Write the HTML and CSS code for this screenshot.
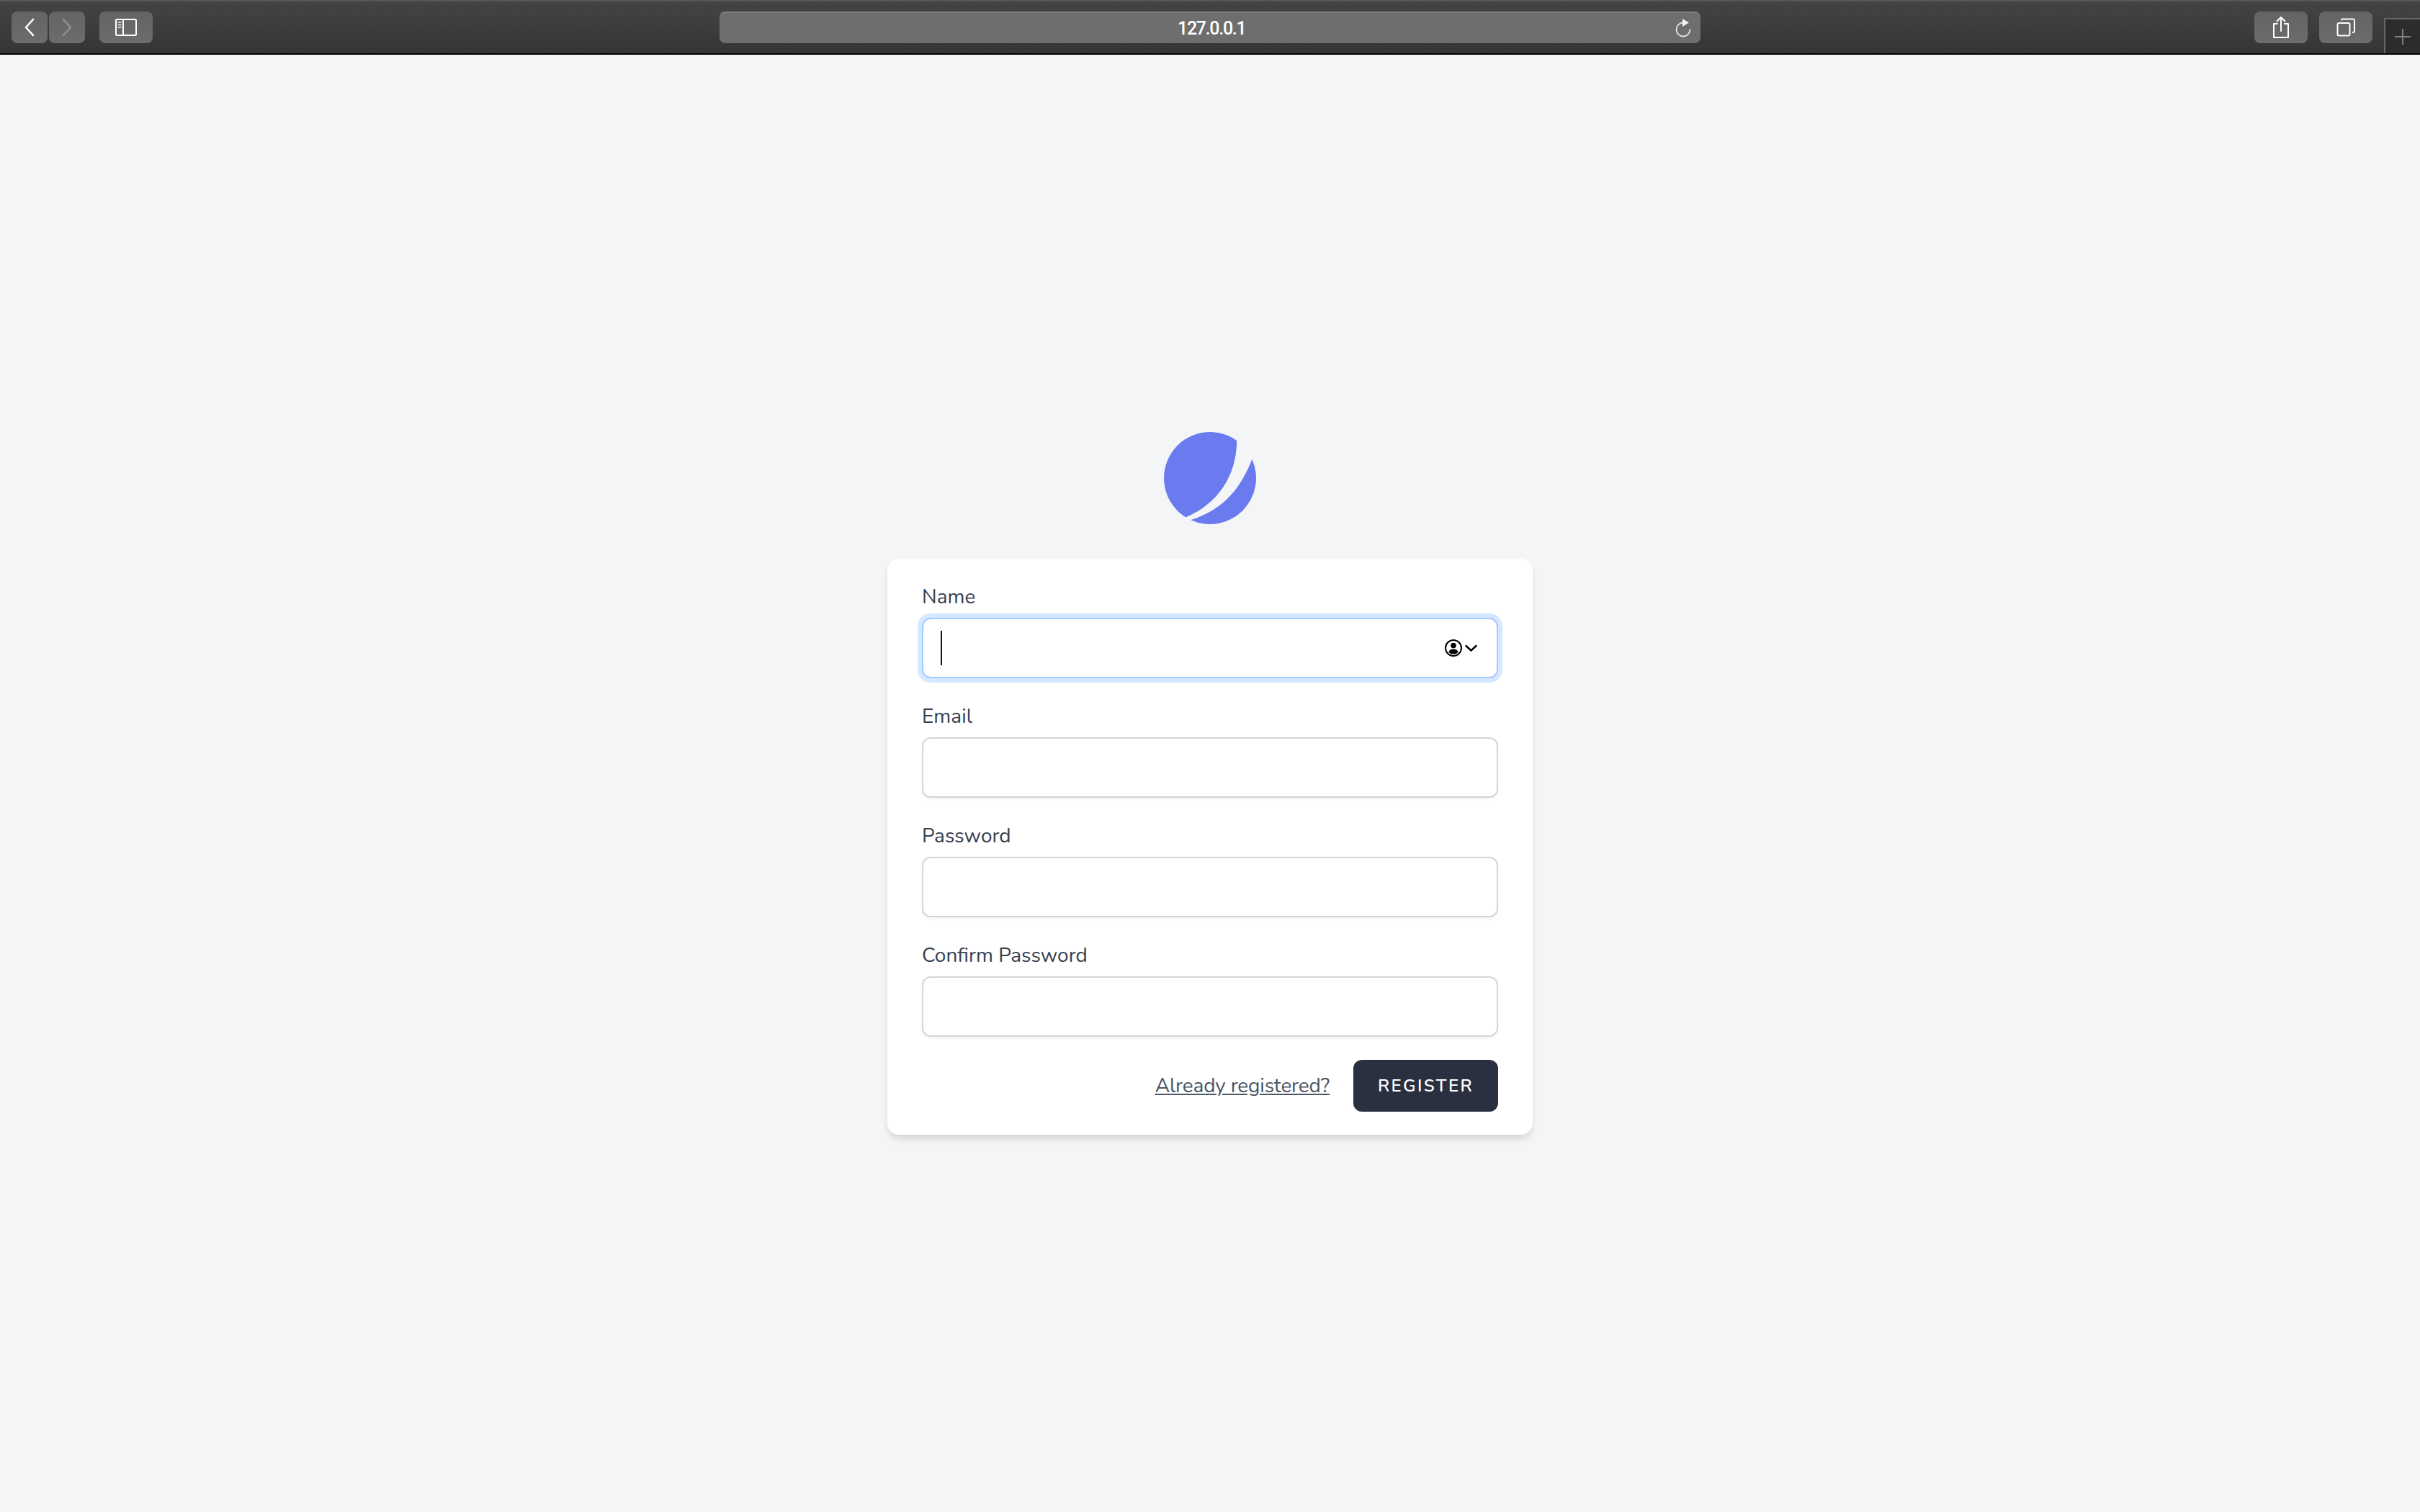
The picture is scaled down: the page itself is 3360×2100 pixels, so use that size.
FILE: index.html
```html
<!DOCTYPE html>
<html lang="en">
<head>
    <meta charset="UTF-8">
    <title>127.0.0.1</title>
    <link rel="stylesheet" href="styles.css">
</head>
<body>

    <!-- Browser toolbar -->
    <header class="toolbar">
        <div class="toolbar-left">
            <div class="tool-btn nav-btn">
                <svg width="16" height="26" viewBox="0 0 16 26"><path d="M13 2 3 13l10 11" fill="none" stroke="#fff" stroke-width="2.6" stroke-linecap="round" stroke-linejoin="round"/></svg>
            </div>
            <div class="tool-btn nav-btn">
                <svg width="16" height="26" viewBox="0 0 16 26"><path d="M3 2l10 11L3 24" fill="none" stroke="#8f8f8f" stroke-width="2.6" stroke-linecap="round" stroke-linejoin="round"/></svg>
            </div>
            <div class="tool-btn wide-btn sidebar-btn">
                <svg width="32" height="26" viewBox="0 0 32 26">
                    <rect x="2" y="2" width="28" height="22" rx="1.5" fill="none" stroke="#fff" stroke-width="2"/>
                    <path d="M12 2v22" stroke="#fff" stroke-width="2"/>
                    <path d="M4.500 6h5M4.500 9.500h5M4.500 13h5" stroke="#d0d0d0" stroke-width="1.800"/>
                </svg>
            </div>
        </div>

        <div class="address-bar">
            <span class="address-text">127.0.0.1</span>
            <svg class="reload-icon" width="24" height="28" viewBox="0 0 24 28">
                <path d="M11.500 6.500a9.500 9.500 0 1 0 10 9.500" fill="none" stroke="#e6e6e6" stroke-width="1.800" stroke-linecap="round"/>
                <path d="M11 1l9 5.500-9 5.500z" fill="#f2f2f2"/>
            </svg>
        </div>

        <div class="toolbar-right">
            <div class="tool-btn wide-btn">
                <svg width="24" height="32" viewBox="0 0 24 32" fill="none" stroke="#fff" stroke-width="2" stroke-linecap="round" stroke-linejoin="round">
                    <path d="M7 11H2v19h20V11h-5"/>
                    <path d="M12 21V2M6.500 7.500 12 2l5.500 5.500"/>
                </svg>
            </div>
            <div class="tool-btn wide-btn">
                <svg width="26" height="26" viewBox="0 0 26 26" fill="none" stroke="#fff" stroke-width="2" stroke-linejoin="round">
                    <rect x="1.500" y="7" width="17" height="17.500" rx="2"/>
                    <path d="M7 3.500V3a2 2 0 0 1 1-1.500h15a2 2 0 0 1 2 1.500v15a2 2 0 0 1-2 2h-1"/>
                </svg>
            </div>
            <div class="new-tab">
                <svg width="24" height="24" viewBox="0 0 24 24"><path d="M12 1v22M1 12h22" stroke="#808080" stroke-width="2"/></svg>
            </div>
        </div>
    </header>

    <!-- Register page -->
    <main class="page">
        <svg class="logo" width="128" height="128" viewBox="0 0 128 128" fill="#6a7bef">
            <path d="M101.160 11.900C101.300 60 75 100 30.400 118.480A64 64 0 1 1 101.160 11.900z"/>
            <path d="M122.340 37.680C108 75 85 107 37.350 122.190A64 64 0 0 0 122.340 37.680z"/>
        </svg>

        <form class="card">
            <div class="field">
                <label class="field-label" for="name">Name</label>
                <div class="input-wrap">
                    <input class="field-input is-focused" id="name" type="text">
                    <span class="caret"></span>
                    <svg class="autofill-icon" width="46" height="24" viewBox="0 0 46 24">
                        <circle cx="12" cy="12" r="11" fill="none" stroke="#000" stroke-width="2"/>
                        <circle cx="12" cy="8.500" r="3.800"/>
                        <path d="M5.500 18c.6-3.500 3.500-4.500 6.500-4.500s5.900 1 6.500 4.500c-1.700 1.700-3.900 2.500-6.500 2.500s-4.800-.8-6.500-2.500z"/>
                        <path d="M29.500 9l7 6.500 7-6.500" fill="none" stroke="#000" stroke-width="2.400" stroke-linecap="round" stroke-linejoin="round"/>
                    </svg>
                </div>
            </div>

            <div class="field">
                <label class="field-label" for="email">Email</label>
                <input class="field-input" id="email" type="email">
            </div>

            <div class="field">
                <label class="field-label" for="password">Password</label>
                <input class="field-input" id="password" type="password">
            </div>

            <div class="field">
                <label class="field-label" for="password_confirmation">Confirm Password</label>
                <input class="field-input" id="password_confirmation" type="password">
            </div>

            <div class="form-actions">
                <a class="login-link" href="#">Already registered?</a>
                <button class="register-btn" type="button">Register</button>
            </div>
        </form>
    </main>

</body>
</html>
```

FILE: styles.css
```css
* {
    box-sizing: border-box;
}

body {
    margin: 0;
    height: 2100px;
    display: flex;
    flex-direction: column;
    background-color: #f4f5f7;
    font-family: "Nunito", "Lato", "Liberation Sans", sans-serif;
}

/* Browser toolbar */
.toolbar {
    height: 76px;
    flex-shrink: 0;
    display: grid;
    grid-template-columns: 1fr 1362px 1fr;
    background: linear-gradient(#444444, #353535);
    border-top: 2px solid #585858;
    border-bottom: 2px solid #000000;
}

.toolbar-left,
.toolbar-right {
    display: flex;
    padding-top: 14px;
}

.toolbar-left {
    padding-left: 16px;
}

.toolbar-right {
    justify-content: flex-end;
    gap: 16px;
}

.tool-btn {
    width: 50px;
    height: 44px;
    display: flex;
    align-items: center;
    justify-content: center;
    border-radius: 8px;
    background: linear-gradient(#646464, #6c6c6c);
}

.nav-btn + .nav-btn {
    margin-left: 2px;
}

.wide-btn {
    width: 74px;
}

.sidebar-btn {
    margin-left: 20px;
}

.new-tab {
    width: 50px;
    height: 49px;
    margin-top: 9px;
    display: flex;
    align-items: center;
    justify-content: center;
    background-color: #2c2c2c;
    border-top: 2px solid #666666;
    border-left: 2px solid #666666;
}

.address-bar {
    height: 44px;
    margin-top: 14px;
    padding-right: 12px;
    display: flex;
    align-items: center;
    justify-content: flex-end;
    position: relative;
    border-radius: 8px;
    background: #6e6e6e;
    border-top: 2px solid #808080;
}

.address-text {
    position: absolute;
    left: 636px;
    color: #ffffff;
    font-family: "Roboto", "Liberation Sans", sans-serif;
    font-size: 25px;
    font-weight: 500;
    letter-spacing: -1.300px;
}

/* Form page */
.page {
    flex: 1;
    display: flex;
    flex-direction: column;
    align-items: center;
    justify-content: center;
}

.logo {
    display: block;
}

.card {
    width: 896px;
    margin-top: 48px;
    padding: 32px 48px;
    background-color: #ffffff;
    border-radius: 16px;
    box-shadow: 0 8px 12px -2px rgba(0, 0, 0, 0.1), 0 4px 8px -2px rgba(0, 0, 0, 0.06);
}

.field {
    margin-bottom: 32px;
}

.field-label {
    display: block;
    height: 40px;
    margin-bottom: 10px;
    color: #374151;
    font-size: 28px;
    line-height: 42px;
}

.input-wrap {
    position: relative;
}

.field-input {
    display: block;
    width: 100%;
    height: 84px;
    padding: 0 24px;
    background-color: #ffffff;
    border: 2px solid #d2d6dc;
    border-radius: 12px;
    outline: none;
    box-shadow: 0 2px 4px rgba(0, 0, 0, 0.05);
}

.field-input.is-focused {
    border-color: #a4cafe;
    box-shadow: 0 0 0 6px rgba(164, 202, 254, 0.45);
}

.caret {
    position: absolute;
    top: 18px;
    left: 26px;
    width: 2px;
    height: 48px;
    background-color: #111827;
}

.autofill-icon {
    position: absolute;
    top: 30px;
    right: 28px;
}

.form-actions {
    display: flex;
    align-items: center;
    justify-content: flex-end;
}

.login-link {
    color: #4b5563;
    font-size: 28px;
    line-height: 40px;
    letter-spacing: -0.150px;
    text-decoration: underline;
}

.register-btn {
    height: 72px;
    width: 201px;
    margin-left: 33px;
    padding: 0;
    color: #ffffff;
    background-color: #2a3040;
    border: none;
    border-radius: 12px;
    font-family: inherit;
    font-size: 24px;
    font-weight: 600;
    letter-spacing: 2.400px;
    text-transform: uppercase;
}
```
